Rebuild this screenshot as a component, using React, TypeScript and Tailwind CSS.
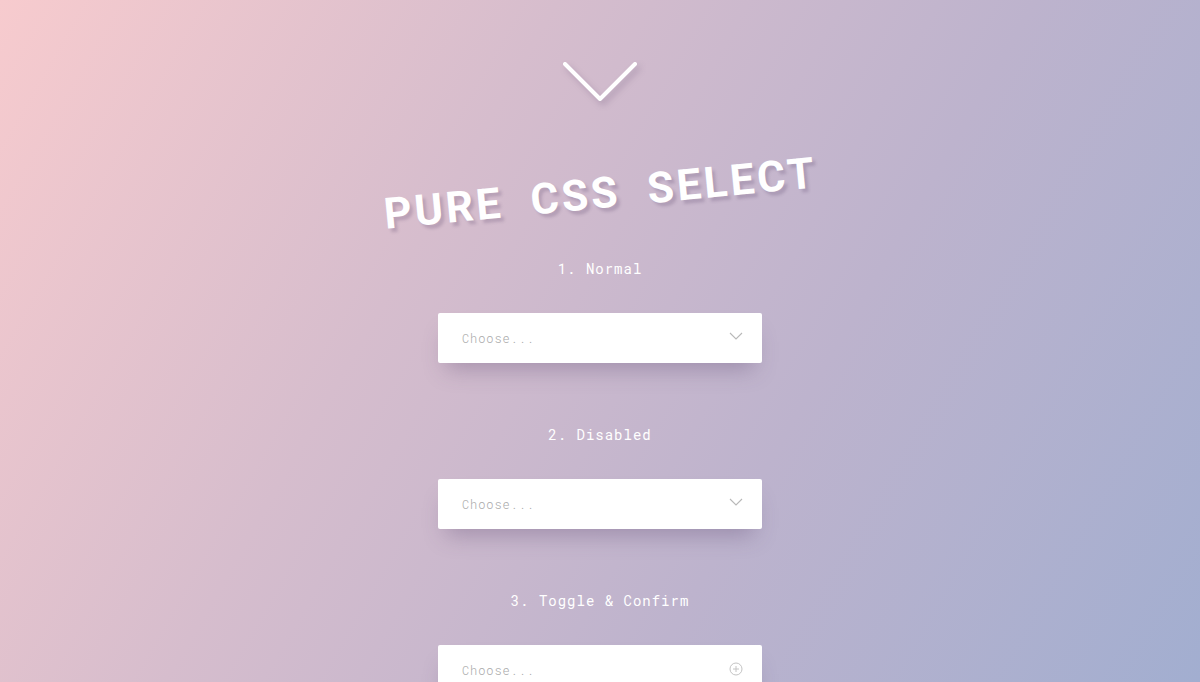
import React from "react";

const mono = "font-['Roboto_Mono','DejaVu_Sans_Mono','Liberation_Mono',monospace]";

function SelectBox({ icon }: { icon: "chevron" | "plus" }) {
  return (
    <div className="flex h-[50px] w-[324px] items-center justify-between rounded-[2px] bg-white pl-6 pr-[18px] shadow-[0_14px_22px_-8px_rgba(90,70,110,0.35)]">
      <span className={`${mono} text-[12px] font-light tracking-[0.9px] text-[#a8a8a8]`}>Choose...</span>
      {icon === "chevron" ? (
        <svg width="16" height="10" viewBox="0 0 16 10" className="-mt-1 h-[10px] w-4">
          <polyline points="2,2 8,8 14,2" fill="none" stroke="#b8b8b8" strokeWidth="1.1" />
        </svg>
      ) : (
        <svg width="14" height="14" viewBox="0 0 14 14" className="-mt-0.5 mr-px h-[14px] w-[14px]">
          <circle cx="7" cy="7" r="6" fill="none" stroke="#c4c4c4" strokeWidth="1" />
          <path d="M7 4v6M4 7h6" stroke="#c4c4c4" strokeWidth="1" />
        </svg>
      )}
    </div>
  );
}

function Label({ children, className = "" }: { children: React.ReactNode; className?: string }) {
  return (
    <p className={`${mono} text-[14px] font-normal leading-5 tracking-[1px] text-white ${className}`}>{children}</p>
  );
}

export default function App() {
  return (
    <main className="flex h-[682px] flex-col items-center overflow-hidden bg-[linear-gradient(120deg,#f7cbce_0%,#d6bdcd_35%,#bdb3cd_65%,#a2aed0_100%)] pt-[58px]">
      <svg
        width="82"
        height="46"
        viewBox="0 0 82 46"
        className="h-[46px] w-[82px] shrink-0 drop-shadow-[3px_4px_3px_rgba(80,60,100,0.25)]"
      >
        <polyline
          points="6,6 41,41 76,6"
          fill="none"
          stroke="white"
          strokeWidth="4"
          strokeLinecap="round"
          strokeLinejoin="round"
        />
      </svg>

      <h1 className="mt-[64px] h-[50px] -rotate-[5.5deg] whitespace-pre font-['Roboto','Liberation_Sans',sans-serif] text-[43px] font-bold leading-[50px] tracking-[3px] text-white [text-shadow:3px_4px_3px_rgba(80,60,100,0.22)]">
        {"PURE  CSS  SELECT"}
      </h1>

      <Label className="mt-[41px]">1. Normal</Label>
      <div className="mt-[34px]">
        <SelectBox icon="chevron" />
      </div>

      <Label className="mt-[62px]">2. Disabled</Label>
      <div className="mt-[34px]">
        <SelectBox icon="chevron" />
      </div>

      <Label className="mt-[62px]">3. Toggle &amp; Confirm</Label>
      <div className="mt-[34px]">
        <SelectBox icon="plus" />
      </div>
    </main>
  );
}
